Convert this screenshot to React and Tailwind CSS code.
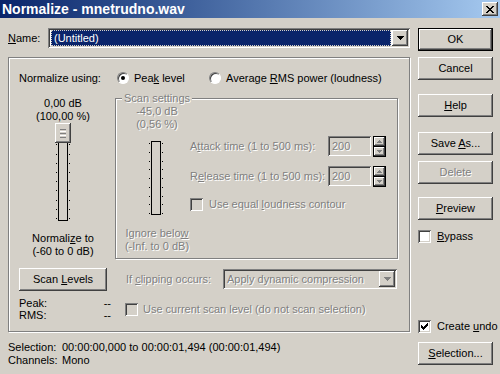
import React from "react";

// win2k style bits
const dis = "text-[#808080] [text-shadow:1px_1px_0_#fff]";
const raised =
  "shadow-[inset_-1px_-1px_#404040,inset_1px_1px_#fff,inset_-2px_-2px_#808080,inset_2px_2px_#d4d0c8]";
const sunken =
  "shadow-[inset_1px_1px_#808080,inset_-1px_-1px_#fff,inset_2px_2px_#404040,inset_-2px_-2px_#d4d0c8]";
const etched = "border border-[#808080] shadow-[1px_1px_0_#fff,inset_1px_1px_0_#fff]";

const U = ({ children }) => <span className="underline">{children}</span>;

const DownArrow = ({ disabled }) => (
  <svg width="7" height="4" viewBox="0 0 7 4" shapeRendering="crispEdges">
    <path d="M0 0h7v1H0zM1 1h5v1H1zM2 2h3v1H2zM3 3h1v1H3z" fill={disabled ? "#808080" : "#000"} />
  </svg>
);

const SmallArrow = ({ up }) => (
  <svg width="5" height="3" viewBox="0 0 5 3" shapeRendering="crispEdges">
    <path d={up ? "M2 0h1v1H2zM1 1h3v1H1zM0 2h5v1H0z" : "M0 0h5v1H0zM1 1h3v1H1zM2 2h1v1H2z"} fill="#808080" />
  </svg>
);

const Button = ({ children, def, disabled, className = "" }) => (
  <div
    className={`h-[23px] flex items-center justify-center bg-[#d4d0c8] ${raised} ${
      def ? "border border-black" : ""
    } ${disabled ? dis : ""} ${className}`}
  >
    <span className="whitespace-pre">{children}</span>
  </div>
);

const Check = ({ checked, disabled }) => (
  <span
    className={`w-[13px] h-[13px] shrink-0 flex items-center justify-center ${sunken} ${
      disabled ? "bg-[#d4d0c8]" : "bg-white"
    }`}
  >
    {checked && (
      <svg width="7" height="7" viewBox="0 0 7 7" shapeRendering="crispEdges">
        <path d="M6 0h1v3H6zM5 1h1v3H5zM4 2h1v3H4zM3 3h1v3H3zM2 4h1v3H2zM1 3h1v3H1zM0 2h1v3H0z" fill="#000" />
      </svg>
    )}
  </span>
);

const Radio = ({ on }) => (
  <span className="w-[12px] h-[12px] shrink-0 rounded-full flex items-center justify-center bg-white border border-t-[#808080] border-l-[#808080] border-b-white border-r-white shadow-[inset_1px_1px_0_#404040]">
    {on && <span className="w-[4px] h-[4px] rounded-full bg-black" />}
  </span>
);

const Combo = ({ children, disabled, className = "" }) => (
  <div className={`flex h-[20px] p-[2px] ${sunken} ${disabled ? "bg-[#d4d0c8]" : "bg-white"} ${className}`}>
    <div className="flex-1 min-w-0 flex items-center">{children}</div>
    <div className={`w-[16px] flex items-center justify-center bg-[#d4d0c8] ${raised}`}>
      <DownArrow disabled={disabled} />
    </div>
  </div>
);

const Ticks = ({ n, className = "" }) => (
  <div className={`w-[1px] flex flex-col justify-between ${className}`}>
    {Array.from({ length: n }).map((_, i) => (
      <span key={i} className="w-[1px] h-[1px] bg-black" />
    ))}
  </div>
);

const Field = ({ value }) => (
  <div className="flex items-center">
    <div className={`w-[43px] h-[20px] flex items-center pl-[4px] bg-[#d4d0c8] ${sunken} ${dis}`}>{value}</div>
    <div className="ml-[2px] w-[13px] h-[21px] flex flex-col">
      <div className={`flex-1 flex items-center justify-center border border-black bg-[#d4d0c8] ${raised}`}>
        <SmallArrow up />
      </div>
      <div className={`flex-1 flex items-center justify-center border border-black border-t-0 bg-[#d4d0c8] ${raised}`}>
        <SmallArrow />
      </div>
    </div>
  </div>
);

export default function App() {
  return (
    <div className="w-[500px] h-[374px] overflow-hidden bg-[#d4d0c8] text-black text-[11px] leading-[13px] font-['Liberation_Sans',Arial,sans-serif]">
      {/* Title bar */}
      <div className="h-[18px] flex items-center justify-between px-[2px] bg-linear-to-r from-[#0a246a] to-[#a6caf0]">
        <span className="text-white font-bold text-[14px] leading-[16px]">Normalize - mnetrudno.wav</span>
        <div className={`w-[16px] h-[14px] flex items-center justify-center bg-[#d4d0c8] ${raised}`}>
          <svg width="8" height="7" viewBox="0 0 8 7" shapeRendering="crispEdges">
            <path d="M0 0h2v1H0zM6 0h2v1H6zM1 1h2v1H1zM5 1h2v1H5zM2 2h4v1H2zM3 3h2v1H3zM2 4h4v1H2zM1 5h2v1H1zM5 5h2v1H5zM0 6h2v1H0zM6 6h2v1H6z" fill="#000" />
          </svg>
        </div>
      </div>

      <div className="flex pl-[8px] pt-[10px]">
        {/* Left side */}
        <div className="w-[402px]">
          <div className="flex items-center h-[20px]">
            <span className="w-[40px]">
              <U>N</U>ame:
            </span>
            <Combo className="w-[362px]">
              <div className="h-full flex-1 m-[1px] flex items-center pl-[2px] bg-[#0a246a] text-white border border-dotted border-[#d4d0c8]">
                (Untitled)
              </div>
            </Combo>
          </div>

          {/* Main group */}
          <div className={`mt-[9px] h-[275px] pl-[10px] pt-[13px] ${etched}`}>
            <div className="flex items-center h-[14px]">
              <span className="w-[98px]">Normalize using:</span>
              <div className="flex items-center w-[92px]">
                <Radio on />
                <span className="ml-[5px]">
                  Pea<U>k</U> level
                </span>
              </div>
              <div className="flex items-center">
                <Radio />
                <span className="ml-[5px]">
                  Average <U>R</U>MS power (loudness)
                </span>
              </div>
            </div>

            <div className="flex items-start mt-[7px]">
              {/* Normalize slider column */}
              <div className="w-[88px] mt-[5px] flex flex-col items-center">
                <div>0,00 dB</div>
                <div>(100,00 %)</div>
                <div className="relative flex h-[98px]">
                  <Ticks n={11} className="pt-[3px] pb-[2px]" />
                  <div className="ml-[1px] mt-[1px] w-[10px] border border-black bg-[#d4d0c8]" />
                  <Ticks n={11} className="ml-[1px] pt-[3px] pb-[2px]" />
                  <div className={`absolute top-0 left-[-1px] w-[16px] h-[20px] flex flex-col items-center justify-center gap-[1px] bg-[#d4d0c8] ${raised}`}>
                    <span className="w-[6px] h-[1px] bg-[#808080]" />
                    <span className="w-[6px] h-[1px] bg-white" />
                    <span className="w-[6px] h-[1px] bg-[#808080]" />
                    <span className="w-[6px] h-[1px] bg-white" />
                    <span className="w-[6px] h-[1px] bg-[#808080]" />
                  </div>
                </div>
                <div className="mt-[11px]">
                  Normali<U>z</U>e to
                </div>
                <div>(-60 to 0 dB)</div>
                <Button className="mt-[10px] w-[88px]">
                  Scan <U>L</U>evels
                </Button>
                <div className="self-start w-[92px] mt-[6px] leading-[12px]">
                  <div className="flex justify-between">
                    <span>Peak:</span>
                    <span>--</span>
                  </div>
                  <div className="flex justify-between">
                    <span>RMS:</span>
                    <span>--</span>
                  </div>
                </div>
              </div>

              {/* Scan settings column */}
              <div className="ml-[8px] w-[283px]">
                <fieldset className={`h-[167px] ${etched}`}>
                  <legend className={`ml-[6px] px-[2px] bg-[#d4d0c8] ${dis}`}>Scan settings</legend>
                  <div className="flex">
                    <div className={`w-[74px] pl-[8px] flex flex-col items-center ${dis}`}>
                      <div>-45,0 dB</div>
                      <div>(0,56 %)</div>
                      <div className="mt-[10px] mr-[3px] flex h-[74px] [text-shadow:none]">
                        <Ticks n={9} className="pt-[2px] pb-[1px]" />
                        <div className="ml-[1px] w-[10px] border border-black bg-[#d4d0c8]" />
                        <Ticks n={9} className="ml-[1px] pt-[2px] pb-[1px]" />
                      </div>
                      <div className="mt-[12px]">
                        Ignore belo<U>w</U>
                      </div>
                      <div>(-Inf. to 0 dB)</div>
                    </div>
                    <div className="flex-1 pt-[31px]">
                      <div className="flex items-center h-[20px]">
                        <span className={`w-[138px] ${dis}`}>
                          A<U>t</U>tack time (1 to 500 ms):
                        </span>
                        <Field value="200" />
                      </div>
                      <div className="flex items-center h-[20px] mt-[10px]">
                        <span className={`w-[138px] ${dis}`}>
                          R<U>e</U>lease time (1 to 500 ms):
                        </span>
                        <Field value="200" />
                      </div>
                      <div className="flex items-center h-[13px] mt-[12px]">
                        <Check disabled />
                        <span className={`ml-[6px] ${dis}`}>
                          Use equal <U>l</U>oudness contour
                        </span>
                      </div>
                    </div>
                  </div>
                </fieldset>

                <div className="flex items-center h-[20px] mt-[10px] pl-[11px]">
                  <span className={`w-[97px] ${dis}`}>
                    If <U>c</U>lipping occurs:
                  </span>
                  <Combo disabled className="w-[174px]">
                    <span className={`pl-[2px] ${dis}`}>Apply dynamic compression</span>
                  </Combo>
                </div>
                <div className="flex items-center h-[13px] mt-[14px] pl-[10px]">
                  <Check disabled />
                  <span className={`ml-[5px] ${dis}`}>Use current scan level (do not scan selection)</span>
                </div>
              </div>
            </div>
          </div>

          <div className="mt-[9px]">
            <div className="flex">
              <span className="w-[54px]">Selection:</span>
              <span>00:00:00,000 to 00:00:01,494 (00:00:01,494)</span>
            </div>
            <div className="flex">
              <span className="w-[54px]">Channels:</span>
              <span>Mono</span>
            </div>
          </div>
        </div>

        {/* Right buttons */}
        <div className="ml-[8px] w-[75px] flex flex-col">
          <Button def>OK</Button>
          <Button className="mt-[6px]">Cancel</Button>
          <Button className="mt-[14px]">
            <U>H</U>elp
          </Button>
          <Button className="mt-[15px]">
            Save <U>A</U>s...
          </Button>
          <Button disabled className="mt-[6px]">
            Delete
          </Button>
          <Button className="mt-[13px]">
            <U>P</U>review
          </Button>
          <div className="flex items-center h-[13px] mt-[10px]">
            <Check />
            <span className="ml-[6px]">
              <U>B</U>ypass
            </span>
          </div>
          <div className="flex items-center h-[13px] mt-[77px] whitespace-nowrap">
            <Check checked />
            <span className="ml-[6px]">
              Create <U>u</U>ndo
            </span>
          </div>
          <Button className="mt-[9px]">
            <U>S</U>election...
          </Button>
        </div>
      </div>
    </div>
  );
}
